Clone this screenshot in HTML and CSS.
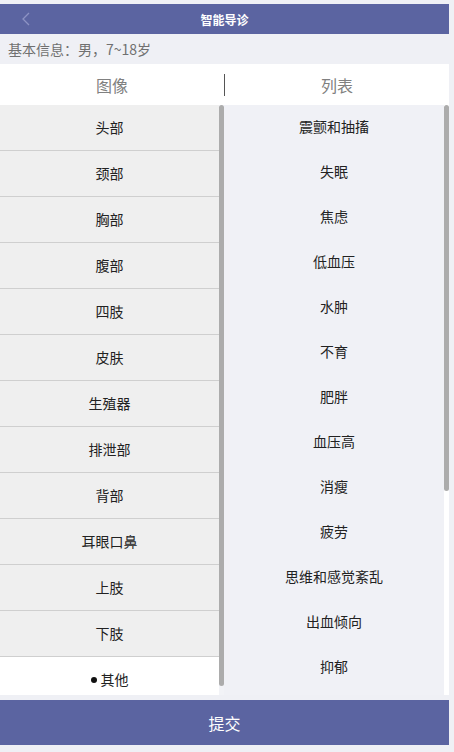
FILE: index.html
```html
<!DOCTYPE html>
<html lang="zh">
<head>
<meta charset="utf-8">
<title>智能导诊</title>
<link rel="stylesheet" href="styles.css">
</head>
<body>
<div class="page">
  <header class="topbar">
    <span class="back">
      <svg width="10" height="14" viewBox="0 0 10 14"><path d="M8 1 L2 7 L8 13" fill="none" stroke="#8d93c4" stroke-width="1.3"/></svg>
    </span>
    <h1 class="title">智能导诊</h1>
  </header>
  <div class="info">基本信息：男，7~18岁</div>
  <div class="tabs">
    <div class="tab">图像</div>
    <div class="tab-divider"></div>
    <div class="tab">列表</div>
  </div>
  <div class="main">
    <div class="pane pane-parts">
      <ul class="parts">
        <li>头部</li>
        <li>颈部</li>
        <li>胸部</li>
        <li>腹部</li>
        <li>四肢</li>
        <li>皮肤</li>
        <li>生殖器</li>
        <li>排泄部</li>
        <li>背部</li>
        <li>耳眼口鼻</li>
        <li>上肢</li>
        <li>下肢</li>
        <li class="active"><span class="dot"></span>其他</li>
      </ul>
      <div class="track track-parts"><div class="thumb" style="height:581px"></div></div>
    </div>
    <div class="pane pane-symptoms">
      <ul class="symptoms">
        <li>震颤和抽搐</li>
        <li>失眠</li>
        <li>焦虑</li>
        <li>低血压</li>
        <li>水肿</li>
        <li>不育</li>
        <li>肥胖</li>
        <li>血压高</li>
        <li>消瘦</li>
        <li>疲劳</li>
        <li>思维和感觉紊乱</li>
        <li>出血倾向</li>
        <li>抑郁</li>
      </ul>
      <div class="track track-symptoms"><div class="thumb" style="height:386px"></div></div>
    </div>
  </div>
  <button class="submit">提交</button>
</div>
</body>
</html>
```

FILE: styles.css
```css
* { box-sizing: border-box; }
html, body {
  margin: 0;
  padding: 0;
  background: #eff0f5;
  font-family: "Noto Sans CJK SC", "Noto Sans", sans-serif;
}
.page {
  width: 449px;
  padding-top: 4px;
}
.topbar {
  height: 30px;
  background: #5b64a1;
  display: flex;
  align-items: center;
  justify-content: center;
  position: relative;
}
.back {
  position: absolute;
  left: 21px;
  top: 8px;
  display: flex;
}
.title {
  margin: 0;
  font-size: 12px;
  font-weight: bold;
  color: #fff;
}
.info {
  height: 30px;
  line-height: 30px;
  padding-left: 8px;
  font-size: 14px;
  color: #707070;
}
.tabs {
  height: 41px;
  background: #fff;
  display: flex;
  align-items: center;
}
.tab {
  flex: 1;
  text-align: center;
  font-size: 16px;
  color: #808080;
}
.tab-divider {
  width: 1px;
  height: 22px;
  background: #555;
}
.main {
  height: 590px;
  display: flex;
}
.pane {
  display: flex;
  height: 100%;
}
.pane-parts { width: 224px; }
.pane-symptoms { width: 225px; }
.parts, .symptoms {
  list-style: none;
  margin: 0;
  padding: 0;
  flex: 1;
  height: 100%;
  overflow: hidden;
}
.parts { background: #efefef; }
.symptoms { background: #f0f1f6; }
.track {
  width: 5px;
  height: 100%;
}
.track-parts { background: #f2f3f7; }
.track-symptoms { background: #fff; }
.thumb {
  width: 5px;
  background: #acacac;
  border-radius: 3px;
}
.parts li {
  height: 46px;
  line-height: 44px;
  border-bottom: 1px solid #cfcfcf;
  text-align: center;
  font-size: 14px;
  color: #222;
}
.parts li.active {
  background: #fff;
  line-height: 45px;
}
.dot {
  display: inline-block;
  width: 6px;
  height: 6px;
  border-radius: 50%;
  background: #111;
  margin-right: 4px;
  vertical-align: middle;
  position: relative;
  top: -1px;
}
.symptoms li {
  height: 45px;
  line-height: 43px;
  text-align: center;
  font-size: 14px;
  color: #222;
}
.submit {
  display: block;
  width: 100%;
  height: 45px;
  margin-top: 5px;
  border: 0;
  background: #5b64a1;
  color: #fff;
  font-family: inherit;
  font-size: 16px;
  padding: 0;
}
```
